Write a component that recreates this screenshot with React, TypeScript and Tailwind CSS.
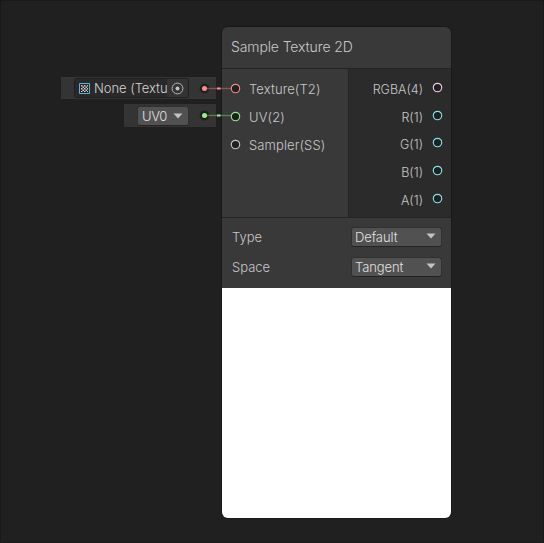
import React from 'react';

function Port({ color }: { color: string }) {
  return (
    <svg className="block h-[11px] w-[11px] shrink-0" viewBox="0 0 11 11">
      <circle cx="5.5" cy="5.5" r="4.2" fill="#202020" stroke={color} strokeWidth="1.15" />
    </svg>
  );
}

function Arrow() {
  return (
    <svg className="block h-[6px] w-[10px] shrink-0" viewBox="0 0 10 6">
      <path d="M.5.5h9L5 5.5z" fill="#c4c4c4" />
    </svg>
  );
}

function Input({ label, color }: { label: string; color: string }) {
  return (
    <div className="flex h-[28px] items-center gap-[8px] pl-[8px]">
      <div className="pb-[2px]"><Port color={color} /></div>
      <span className="tracking-[0.1px]">{label}</span>
    </div>
  );
}

function Output({ label, color }: { label: string; color: string }) {
  return (
    <div className="flex h-[27.75px] items-center justify-end gap-[9px] pr-[8px]">
      <span className="pt-[2px] text-[12.5px] tracking-[0px]">{label}</span>
      <div className="pb-[3px]"><Port color={color} /></div>
    </div>
  );
}

function Setting({ label, value }: { label: string; value: string }) {
  return (
    <div className="flex h-[30px] items-center justify-between pl-[10px] pr-[9px]">
      <span className="tracking-[0px]">{label}</span>
      <div className="flex h-[20px] w-[91px] items-center justify-between rounded-[3px] border border-[#303030] border-b-[#242424] bg-[#515151] pl-[3px] pr-[5px] text-[#e0e0e0]">
        <span className="tracking-[-0.1px]">{value}</span>
        <div className="pb-[2px]"><Arrow /></div>
      </div>
    </div>
  );
}

function Connector({ color }: { color: string }) {
  return (
    <svg className="block h-[11px] w-[32px] shrink-0" viewBox="0 0 32 11">
      <circle cx="5.5" cy="5.5" r="4.9" fill="#202020" />
      <path d="M8 5.5h24" stroke={color} strokeOpacity=".38" strokeWidth="1.4" />
      <circle cx="5.5" cy="5.5" r="2.5" fill={color} />
      <path d="M18 5.5h3.5" stroke={color} strokeWidth="2" />
    </svg>
  );
}

export default function App() {
  return (
    <div className="relative h-[543px] w-[544px] overflow-hidden border border-[#191919] bg-[#202020] font-['Inter',sans-serif] text-[13px] font-[350] leading-[16px] text-[#c8c8c8]">
      <div className="absolute left-[220px] top-[25px] flex h-[493px] w-[231px] flex-col overflow-hidden rounded-[7px] border border-[#191919] bg-[#393939]">
        <header className="flex h-[42px] shrink-0 items-center border-b border-[#242424] pb-px pl-[9px] text-[14px]">
          <span className="tracking-[-0.12px]">Sample Texture 2D</span>
        </header>
        <div className="flex h-[149px] shrink-0 border-b border-[#232323]">
          <div className="w-[127px] border-r border-[#242424] pt-[6px]">
            <Input label="Texture(T2)" color="#f08a8a" />
            <Input label="UV(2)" color="#92e68d" />
            <Input label="Sampler(SS)" color="#c4c4c4" />
          </div>
          <div className="flex-1 bg-[#2b2b2b] pt-[6px]">
            <Output label="RGBA(4)" color="#f3c8ed" />
            <Output label="R(1)" color="#84e4e7" />
            <Output label="G(1)" color="#84e4e7" />
            <Output label="B(1)" color="#84e4e7" />
            <Output label="A(1)" color="#84e4e7" />
          </div>
        </div>
        <div className="h-[70px] shrink-0 pt-[4px]">
          <Setting label="Type" value="Default" />
          <Setting label="Space" value="Tangent" />
        </div>
        <div className="flex-1 bg-white" />
      </div>

      <div className="absolute left-[60px] top-[76px] flex h-[22px] w-[155px] items-center bg-[#343434] pl-[13px]">
        <div className="flex h-[20px] w-[115px] shrink-0 items-center rounded-[3px] border border-[#202020] bg-[#292929] text-[#d2d2d2]">
          <svg className="ml-[4px] h-[11px] w-[11px] shrink-0" viewBox="0 0 11 11">
            <path d="M.5.5h10v10H.5z" fill="#252525" stroke="#5fb2d4" />
            <path d="M2 2h1.5v1.5H2zM5 2h1.5v1.5H5zM8 2h1v1.5H8zM3.5 3.5H5V5H3.5zM6.5 3.5H8V5H6.5zM2 5h1.5v1.5H2zM5 5h1.5v1.5H5zM8 5h1v1.5H8zM3.5 6.5H5V8H3.5zM6.5 6.5H8V8H6.5zM2 8h1.5v1H2zM5 8h1.5v1H5zM8 8h1v1H8z" fill="#ccc" />
          </svg>
          <span className="ml-[4px] w-[73px] shrink-0 whitespace-nowrap tracking-[-0.05px]">None (Textu</span>
          <div className="flex h-full flex-1 items-center justify-center rounded-r-[2px] bg-[#343434]">
            <svg className="h-[13px] w-[13px] shrink-0" viewBox="0 0 13 13">
              <circle cx="6.5" cy="6.5" r="5.4" fill="none" stroke="#b8b8b8" />
              <circle cx="6.5" cy="6.5" r="2" fill="#c4c4c4" />
            </svg>
          </div>
        </div>
        <div className="ml-[10px]"><Connector color="#ff8b8b" /></div>
      </div>

      <div className="absolute left-[123px] top-[103px] flex h-[23px] w-[92px] items-center bg-[#343434] pl-[13px]">
        <div className="flex h-[20px] w-[52px] shrink-0 items-center justify-between rounded-[3px] border border-[#303030] border-b-[#242424] bg-[#515151] pl-[4px] pr-[5px] text-[#e0e0e0]">
          <span className="tracking-[-0.4px]">UV0</span>
          <Arrow />
        </div>
        <div className="ml-[10px]"><Connector color="#94ef90" /></div>
      </div>
    </div>
  );
}
